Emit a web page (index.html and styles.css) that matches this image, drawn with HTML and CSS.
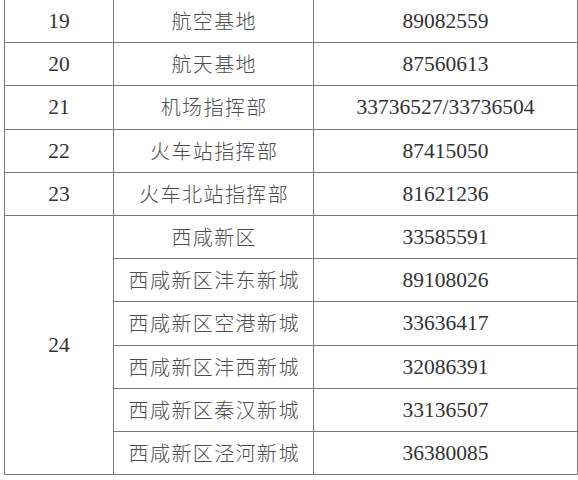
FILE: index.html
```html
<!DOCTYPE html>
<html lang="zh-CN">
<head>
<meta charset="utf-8">
<link rel="stylesheet" href="styles.css">
</head>
<body>
<table class="phone-table">
  <colgroup>
    <col class="c-no">
    <col class="c-name">
    <col class="c-tel">
  </colgroup>
  <tbody>
    <tr><td class="num">19</td><td class="name">航空基地</td><td class="num">89082559</td></tr>
    <tr><td class="num">20</td><td class="name">航天基地</td><td class="num">87560613</td></tr>
    <tr><td class="num">21</td><td class="name">机场指挥部</td><td class="num">33736527/33736504</td></tr>
    <tr><td class="num">22</td><td class="name">火车站指挥部</td><td class="num">87415050</td></tr>
    <tr><td class="num">23</td><td class="name">火车北站指挥部</td><td class="num">81621236</td></tr>
    <tr><td class="num" rowspan="6">24</td><td class="name">西咸新区</td><td class="num">33585591</td></tr>
    <tr><td class="name">西咸新区沣东新城</td><td class="num">89108026</td></tr>
    <tr><td class="name">西咸新区空港新城</td><td class="num">33636417</td></tr>
    <tr><td class="name">西咸新区沣西新城</td><td class="num">32086391</td></tr>
    <tr><td class="name">西咸新区秦汉新城</td><td class="num">33136507</td></tr>
    <tr><td class="name">西咸新区泾河新城</td><td class="num">36380085</td></tr>
  </tbody>
</table>
</body>
</html>
```
FILE: styles.css
```css
html, body {
  margin: 0;
  padding: 0;
  background: #ffffff;
}
body {
  overflow: hidden;
}
.phone-table {
  border-collapse: collapse;
  table-layout: fixed;
  width: 573px;
  margin: -1px 0 0 4px;
  color: #333333;
}
.c-no { width: 109px; }
.c-name { width: 200px; }
.c-tel { width: 264px; }
.phone-table tr {
  height: 43.2px;
}
.phone-table td {
  border: 1px solid #7a7a7a;
  padding: 0;
  text-align: center;
  vertical-align: middle;
  line-height: 24px;
}
.num {
  font-family: "Liberation Serif", "Times New Roman", serif;
  font-size: 21.5px;
}
.name {
  font-family: "Noto Sans CJK SC", sans-serif;
  font-weight: 300;
  font-size: 20px;
  letter-spacing: 1.4px;
  text-indent: 1.4px;
  color: #4d4d4d;
}
```
